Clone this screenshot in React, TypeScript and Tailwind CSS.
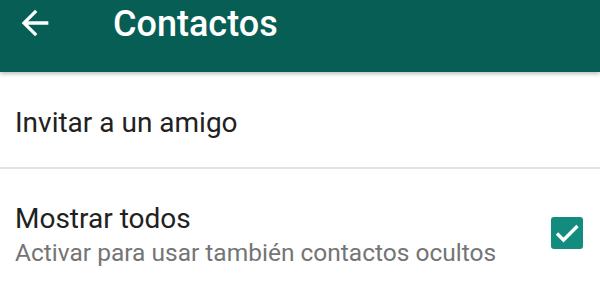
import React from 'react';

const App: React.FC = () => {
  return (
    <div className="w-[600px] h-[292px] overflow-hidden bg-white font-['Roboto',sans-serif]">
      <header className="relative z-10 h-[72px] bg-[#075e54] flex items-start shadow-[0_2px_4px_rgba(0,0,0,0.25)]">
        <svg viewBox="0 0 24 24" className="w-[40px] h-[40px] ml-[15px] mt-[3px] fill-white">
          <path d="M20 11H7.83l5.59-5.59L12 4l-8 8 8 8 1.41-1.41L7.83 13H20v-2z" />
        </svg>
        <h1 className="ml-[58px] mt-[3px] text-[36px] leading-[42px] font-medium text-white">Contactos</h1>
      </header>

      <div className="h-[97px] flex items-start pt-[34px] px-[15px] border-b-2 border-[#e2e2e2]">
        <span className="text-[28px] leading-[34px] text-[#212121]">Invitar a un amigo</span>
      </div>

      <div className="flex items-start justify-between pl-[15px] pr-[17px] pt-[33px]">
        <div className="flex flex-col">
          <span className="text-[28px] leading-[34px] text-[#212121]">Mostrar todos</span>
          <span className="text-[24.5px] leading-[34px] text-[#757575]">Activar para usar también contactos ocultos</span>
        </div>
        <div className="mt-[15px] w-[32px] h-[32px] rounded-[3px] bg-[#128c7e]">
          <svg viewBox="0 0 32 32" className="w-[32px] h-[32px] fill-none stroke-white stroke-[3.4]">
            <path d="M6 16.5l6.5 6.5L26.5 9" />
          </svg>
        </div>
      </div>
    </div>
  );
};

export default App;
